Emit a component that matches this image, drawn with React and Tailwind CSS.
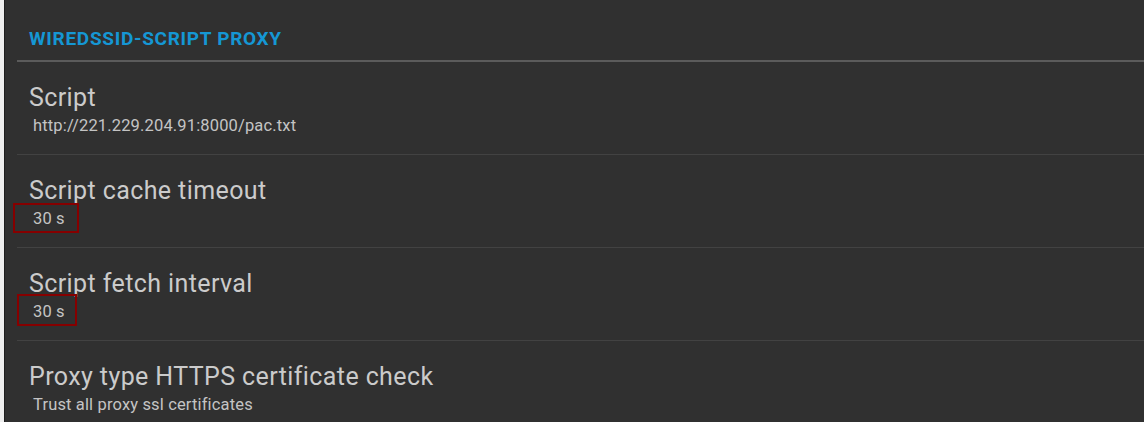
import React from 'react'

const items = [
  { title: 'Script', summary: 'http://221.229.204.91:8000/pac.txt' },
  { title: 'Script cache timeout', summary: '30 s' },
  { title: 'Script fetch interval', summary: '30 s' },
  { title: 'Proxy type HTTPS certificate check', summary: 'Trust all proxy ssl certificates' },
]

export default function App() {
  return (
    <div
      className="relative flex w-[1144px] h-[422px] overflow-hidden bg-[#303030]"
      style={{ fontFamily: 'Roboto, "Noto Sans", sans-serif' }}
    >
      {/* left edge of the window */}
      <div className="w-[4px] shrink-0 bg-[#eeeeee]" />
      <div className="w-px shrink-0 bg-[#1e1e1e]" />

      <div className="flex-1 pl-[12px]">
        {/* Category header */}
        <div className="h-[60px] pl-[12px] pt-[28px]">
          <span className="text-[19px] leading-[22px] font-bold tracking-[0.7px] text-[#1597d4]">
            WIREDSSID-SCRIPT PROXY
          </span>
        </div>
        <div className="h-[2px] bg-[#5b5b5b]" />

        {items.map((item, i) => (
          <div key={item.title}>
            {i > 0 && <div className="h-px bg-[#424242]" />}
            <div className="h-[92px] pl-[12px] pt-[22px]">
              <div className="text-[25px] leading-[28px] tracking-[0.4px] text-[#cbcbcb]">
                {item.title}
              </div>
              <div className="mt-[5px] pl-[4px] text-[16.5px] leading-[18px] tracking-[0.15px] text-[#c4c4c4]">
                {item.summary}
              </div>
            </div>
          </div>
        ))}
      </div>

      {/* annotation boxes */}
      <div className="absolute left-[13px] top-[203px] w-[66px] h-[30px] border-2 border-[#860000]" />
      <div className="absolute left-[17px] top-[294px] w-[60px] h-[32px] border-2 border-[#860000]" />
    </div>
  )
}
